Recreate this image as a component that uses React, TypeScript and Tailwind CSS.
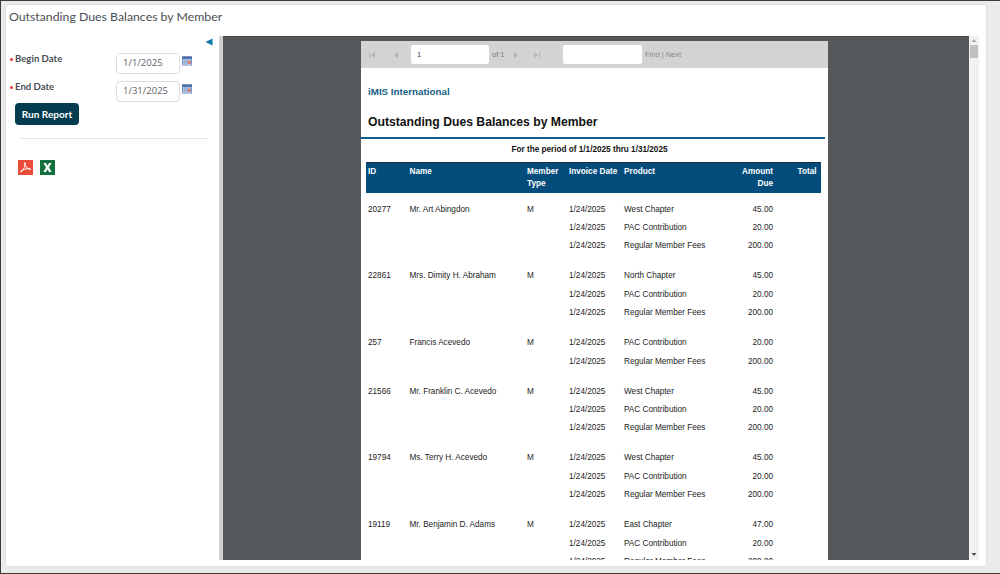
import React from "react";

const cols = "grid grid-cols-[41.5px_117.5px_42px_55px_100px_49px_43.5px]";

type Row = { d: string; p: string; a: string };
const F = (p: string, a: string): Row => ({ d: "1/24/2025", p, a });
const west = F("West Chapter", "45.00");
const north = F("North Chapter", "45.00");
const east = F("East Chapter", "47.00");
const pac = F("PAC Contribution", "20.00");
const reg = F("Regular Member Fees", "200.00");

const groups: { id: string; name: string; rows: Row[] }[] = [
  { id: "20277", name: "Mr. Art Abingdon", rows: [west, pac, reg] },
  { id: "22861", name: "Mrs. Dimity H. Abraham", rows: [north, pac, reg] },
  { id: "257", name: "Francis Acevedo", rows: [pac, reg] },
  { id: "21566", name: "Mr. Franklin C. Acevedo", rows: [west, pac, reg] },
  { id: "19794", name: "Ms. Terry H. Acevedo", rows: [west, pac, reg] },
  { id: "19119", name: "Mr. Benjamin D. Adams", rows: [east, pac, reg] },
];

function CalendarIcon() {
  return (
    <svg width="10" height="10" viewBox="0 0 11 11" className="shrink-0">
      <rect x="0" y="0.5" width="11" height="10" fill="#6f8fc4" />
      <rect x="0" y="0.5" width="11" height="2.5" fill="#4c6ea8" />
      <rect x="1" y="3.5" width="9" height="6.5" fill="#b9cbe6" />
      <path d="M1 5.5h9M1 7.5h9M3.5 3.5v6.5M6 3.5v6.5" stroke="#7f9bc9" strokeWidth="0.6" />
      <rect x="6.5" y="5.5" width="3" height="3" fill="#e0744f" />
    </svg>
  );
}

function DateField({ label, value }: { label: string; value: string }) {
  return (
    <div className="flex items-start">
      <div className="w-[110px] pl-[4px] flex items-center h-[14px] text-[9.6px] font-bold text-[#4a4f55] font-['Lato',sans-serif]">
        <span className="w-[5px] h-[2px] flex items-center">
          <span className="w-[3px] h-[3px] rounded-full bg-[#e8343c]" />
        </span>
        <span>{label}</span>
      </div>
      <div className="mt-[1px] w-[64px] h-[21px] border border-[#dcdcdc] rounded-[4px] bg-white pl-[6px] flex items-center text-[9.5px] text-[#5f6368] font-['Open_Sans',sans-serif]">
        {value}
      </div>
      <div className="ml-[2px] mt-[4px]">
        <CalendarIcon />
      </div>
    </div>
  );
}

function NavIcon({ d }: { d: string }) {
  return (
    <svg width="8" height="8" viewBox="0 0 8 8" className="shrink-0">
      <path d={d} fill="#b4b4b4" />
    </svg>
  );
}

export default function App() {
  return (
    <div className="w-[1000px] h-[574px] overflow-hidden bg-[#3b3b3b] pt-[1px] pb-[1px] pl-[1px] font-['Liberation_Sans',Arial,sans-serif]">
      <div className="w-full h-full bg-[#ebebeb] pt-[4px] pl-[5px] pr-[14px] pb-[7px]">
        <div className="w-full h-full bg-white rounded-[2px] flex flex-col shadow-[0_0_2px_rgba(0,0,0,0.15)]">
          <div className="h-[31px] shrink-0 pl-[3px] pt-[2px] text-[12.3px] leading-[20px] text-[#4a4f55] font-['Lato',sans-serif]">
            Outstanding Dues Balances by Member
          </div>
          <div className="flex h-[524px] shrink-0">
            <div className="w-[213px] shrink-0 flex flex-col">
              <div className="h-[12px] flex justify-end items-center pr-[6px]">
                <svg width="8" height="8" viewBox="0 0 8 8">
                  <path d="M0.5 4 L7.5 0.5 V7.5 Z" fill="#0f76a8" />
                </svg>
              </div>
              <div className="flex flex-col gap-[6px] mt-[4px]">
                <DateField label="Begin Date" value="1/1/2025" />
                <DateField label="End Date" value="1/31/2025" />
              </div>
              <div className="pl-[9px] mt-[1px]">
                <div className="w-[64px] h-[22px] rounded-[4px] bg-[#053c50] text-white flex items-center justify-center text-[10px] font-bold font-['Lato',sans-serif]">
                  Run Report
                </div>
              </div>
              <div className="h-[1px] bg-[#e6e6e6] ml-[14px] mr-[11px] mt-[13px]" />
              <div className="flex gap-[7px] pl-[12px] mt-[21px]">
                <svg width="15" height="15" viewBox="0 0 15 15">
                  <rect width="15" height="15" fill="#ea4c3a" />
                  <path
                    d="M7 2.5c.6 0 .6 1.6-.2 3.7-.8 2.1-2 4.2-3.3 5.4-.6.6-1.1.4-.9-.1.3-.7 1.9-1.7 4.6-2.4 2.4-.6 5-.7 5.4-.1.3.5-.6.7-1.6.2-1.7-.9-3.8-3.4-4.4-5.2-.2-.8 0-1.5.4-1.5Z"
                    fill="none"
                    stroke="#fff"
                    strokeWidth="1"
                  />
                </svg>
                <svg width="15" height="15" viewBox="0 0 15 15">
                  <rect width="15" height="15" fill="#13703f" />
                  <path d="M3.5 3H6l1.5 2.7L9 3h2.5L9 7.5l2.6 4.5H9L7.5 9.3 6 12H3.4L6 7.5Z" fill="#fff" />
                </svg>
              </div>
            </div>
            <div className="w-[4px] shrink-0 bg-[#cfcfcf]" />
            <div className="w-[746px] shrink-0 bg-[#54585b] border-t border-[#45484a] pt-[4px] pl-[138px] overflow-hidden">
              <div className="w-[467px] h-[520px] bg-white overflow-hidden text-[#1c1c1c] text-[8.2px] leading-[11px]">
                <div className="h-[27px] bg-[#d3d3d3] flex items-center text-[#8a8a8a] text-[7.5px]">
                  <div className="w-[50px] pl-[7px] flex gap-[16px]">
                    <NavIcon d="M1 1h1v6H1zM7 1v6L3 4z" />
                    <NavIcon d="M6 1v6L2 4z" />
                  </div>
                  <div className="w-[78px] h-[19px] bg-white rounded-[2px] pl-[6px] flex items-center text-[#444]">1</div>
                  <div className="ml-[3px] w-[16px] text-[#777]">of 1</div>
                  <div className="flex gap-[13px] w-[55px] pl-[4px] items-center">
                    <NavIcon d="M2 1v6l4-3z" />
                    <NavIcon d="M1 1v6l4-3zM6 1h1v6H6z" />
                  </div>
                  <div className="w-[79px] h-[19px] bg-white rounded-[2px]" />
                  <div className="ml-[3px]">Find | Next</div>
                </div>
                <div className="h-[71px] border-b-[2px] border-[#0f5f8c] pl-[7px] mr-[3px]">
                  <div className="pt-[18px] text-[9.8px] leading-[12px] font-bold text-[#155f86]">iMIS International</div>
                  <div className="pt-[16px] text-[12.2px] leading-[16px] font-bold text-[#111]">Outstanding Dues Balances by Member</div>
                </div>
                <div className="h-[23px] flex items-start justify-center font-bold text-[#111] text-[8.2px] pt-[5px] pr-[10px]">
                  For the period of 1/1/2025 thru 1/31/2025
                </div>
                <div className={`${cols} ml-[5px] w-[455px] h-[31px] pl-[2px] pt-[3px] bg-[#044c7c] border-t border-[#1e2d3a] text-white font-bold text-[8.2px] leading-[12px]`}>
                  <div>ID</div>
                  <div>Name</div>
                  <div>Member<br />Type</div>
                  <div>Invoice Date</div>
                  <div>Product</div>
                  <div className="text-right">Amount<br />Due</div>
                  <div className="text-right">Total</div>
                </div>
                <div className="ml-[5px] pl-[2px] pt-[7px]">
                  {groups.map((g) => (
                    <div key={g.id} className="pb-[11.6px]">
                      {g.rows.map((r, i) => (
                        <div key={i} className={`${cols} h-[18.4px] items-center`}>
                          <div>{i === 0 ? g.id : ""}</div>
                          <div>{i === 0 ? g.name : ""}</div>
                          <div>{i === 0 ? "M" : ""}</div>
                          <div>{r.d}</div>
                          <div>{r.p}</div>
                          <div className="text-right">{r.a}</div>
                          <div />
                        </div>
                      ))}
                    </div>
                  ))}
                </div>
              </div>
            </div>
            <div className="w-[10px] shrink-0 bg-[#f1f1f1] flex flex-col items-center pt-[2px]">
              <svg width="6" height="5" viewBox="0 0 6 5"><path d="M3 1 L5.5 4 H0.5Z" fill="#a8a8a8" /></svg>
              <div className="w-[8px] h-[13px] bg-[#c1c1c1] mt-[2px]" />
              <div className="flex-1" />
              <svg width="6" height="5" viewBox="0 0 6 5" className="mb-[3px]"><path d="M3 4 L5.5 1 H0.5Z" fill="#505050" /></svg>
            </div>
          </div>
        </div>
      </div>
    </div>
  );
}
